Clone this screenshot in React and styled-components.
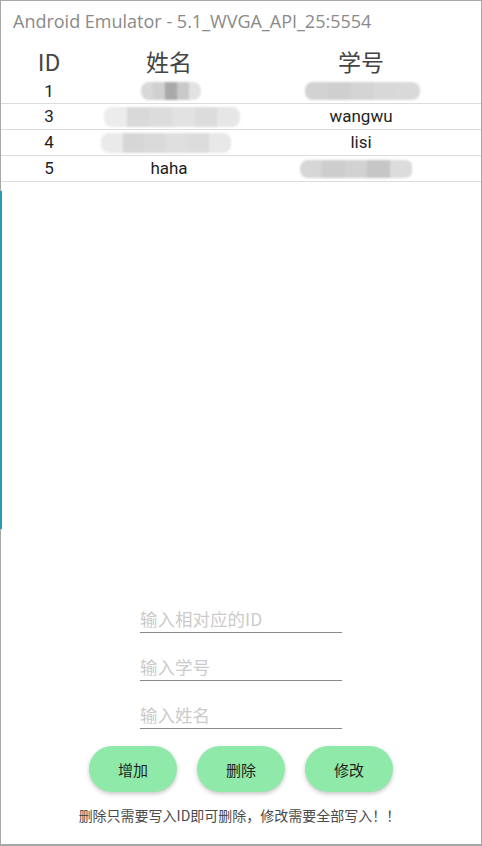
import React from "react";
import styled, { createGlobalStyle } from "styled-components";

const Global = createGlobalStyle`
  html, body { margin: 0; padding: 0; background: #fff; }
  * { box-sizing: border-box; }
`;

const Frame = styled.div`
  position: relative;
  width: 482px;
  height: 846px;
  border: 1px solid #a8a8a8;
  border-bottom-width: 2px;
  background: #fff;
  display: flex;
  flex-direction: column;
  font-family: Roboto, "Noto Sans CJK SC", sans-serif;
  &::before {
    content: "";
    position: absolute;
    left: -1px;
    top: 190px;
    width: 2px;
    height: 338px;
    background: #2b98b5;
  }
`;

const TitleBar = styled.div`
  height: 43px;
  display: flex;
  align-items: center;
  padding-left: 12px;
  padding-bottom: 3px;
  font-family: "Open Sans", "Noto Sans", sans-serif;
  font-size: 18px;
  color: #8a8a8a;
  white-space: nowrap;
`;

const Row = styled.div`
  display: grid;
  grid-template-columns: 2fr 3fr 5fr;
  align-items: center;
  height: ${(p) => p.$h}px;
  border-bottom: ${(p) => (p.$line ? "1px solid #dcdcdc" : "none")};
`;

const HeadCell = styled.div`
  text-align: center;
  font-family: "Noto Sans CJK SC", Roboto, sans-serif;
  font-size: 23px;
  color: #444;
  line-height: 1;
`;

const Cell = styled.div`
  text-align: center;
  font-family: Roboto, "Noto Sans CJK SC", sans-serif;
  font-size: 17px;
  color: #1e1e1e;
  line-height: 1;
  display: flex;
  justify-content: center;
  transform: translateX(${(p) => p.$dx || 0}px);
`;

const Mosaic = styled.span`
  display: inline-flex;
  height: ${(p) => p.$h}px;
  filter: blur(1.2px);
  border-radius: 8px;
  overflow: hidden;
`;

const Block = styled.span`
  display: block;
  height: 100%;
  flex: 1;
`;

const Redact = ({ w, h = 18, colors }) => (
  <Mosaic $h={h} style={{ width: w }}>
    {colors.map((c, i) => (
      <Block key={i} style={{ background: c }} />
    ))}
  </Mosaic>
);

const Spacer = styled.div`
  flex: 1;
`;

const Form = styled.div`
  display: flex;
  flex-direction: column;
  align-items: center;
`;

const Field = styled.input`
  width: 202px;
  height: 28px;
  margin-top: 20px;
  border: none;
  border-bottom: 1px solid #8a8a8a;
  outline: none;
  padding: 0;
  background: transparent;
  font-family: "Noto Sans CJK SC", Roboto, sans-serif;
  font-size: 17.5px;
  color: #222;
  &::placeholder { color: #cbcbcb; }
`;

const Buttons = styled.div`
  display: flex;
  justify-content: center;
  gap: 20px;
  margin-top: 17px;
`;

const Pill = styled.button`
  width: 88px;
  height: 46px;
  border: none;
  border-radius: 23px;
  background: #8fe9a8;
  box-shadow: 0 2px 4px rgba(0, 0, 0, 0.22);
  font-family: "Noto Sans CJK SC", Roboto, sans-serif;
  font-size: 15px;
  color: #1f1f1f;
  padding: 0;
`;

const Hint = styled.div`
  margin-top: 13px;
  margin-bottom: 19px;
  height: 20px;
  line-height: 20px;
  text-align: center;
  font-family: "Noto Sans CJK SC", Roboto, sans-serif;
  font-size: 14px;
  color: #4a4a4a;
  padding-right: 3px;
`;

export default function App() {
  return (
    <>
      <Global />
      <Frame>
        <TitleBar>Android Emulator - 5.1_WVGA_API_25:5554</TitleBar>
        <Row $h={35}>
          <HeadCell>ID</HeadCell>
          <HeadCell>姓名</HeadCell>
          <HeadCell>学号</HeadCell>
        </Row>
        <Row $h={25} $line>
          <Cell>1</Cell>
          <Cell $dx={2}>
            <Redact w={60} colors={["#d8d8d8", "#d0d0d0", "#a9a9a9", "#c9c9c9", "#e2e2e2"]} />
          </Cell>
          <Cell $dx={1}>
            <Redact w={115} colors={["#d2d2d2", "#cfcfcf", "#d4d4d4", "#d8d8d8", "#d9d9d9"]} />
          </Cell>
        </Row>
        <Row $h={26} $line>
          <Cell>3</Cell>
          <Cell $dx={3}>
            <Redact w={136} h={20} colors={["#ececec", "#d9d9d9", "#dcdcdc", "#e2e2e2", "#dcdcdc", "#e6e6e6"]} />
          </Cell>
          <Cell>wangwu</Cell>
        </Row>
        <Row $h={26} $line>
          <Cell>4</Cell>
          <Cell $dx={-3}>
            <Redact w={130} h={20} colors={["#eaeaea", "#d6d6d6", "#dadada", "#dedede", "#dcdcdc", "#e8e8e8"]} />
          </Cell>
          <Cell>lisi</Cell>
        </Row>
        <Row $h={26} $line>
          <Cell>5</Cell>
          <Cell>haha</Cell>
          <Cell $dx={-5}>
            <Redact w={113} colors={["#d6d6d6", "#cdcdcd", "#d2d2d2", "#c6c6c6", "#dcdcdc"]} />
          </Cell>
        </Row>
        <Spacer />
        <Form>
          <Field placeholder="输入相对应的ID" />
          <Field placeholder="输入学号" />
          <Field placeholder="输入姓名" />
        </Form>
        <Buttons>
          <Pill>增加</Pill>
          <Pill>删除</Pill>
          <Pill>修改</Pill>
        </Buttons>
        <Hint>删除只需要写入ID即可删除，修改需要全部写入！！</Hint>
      </Frame>
    </>
  );
}
